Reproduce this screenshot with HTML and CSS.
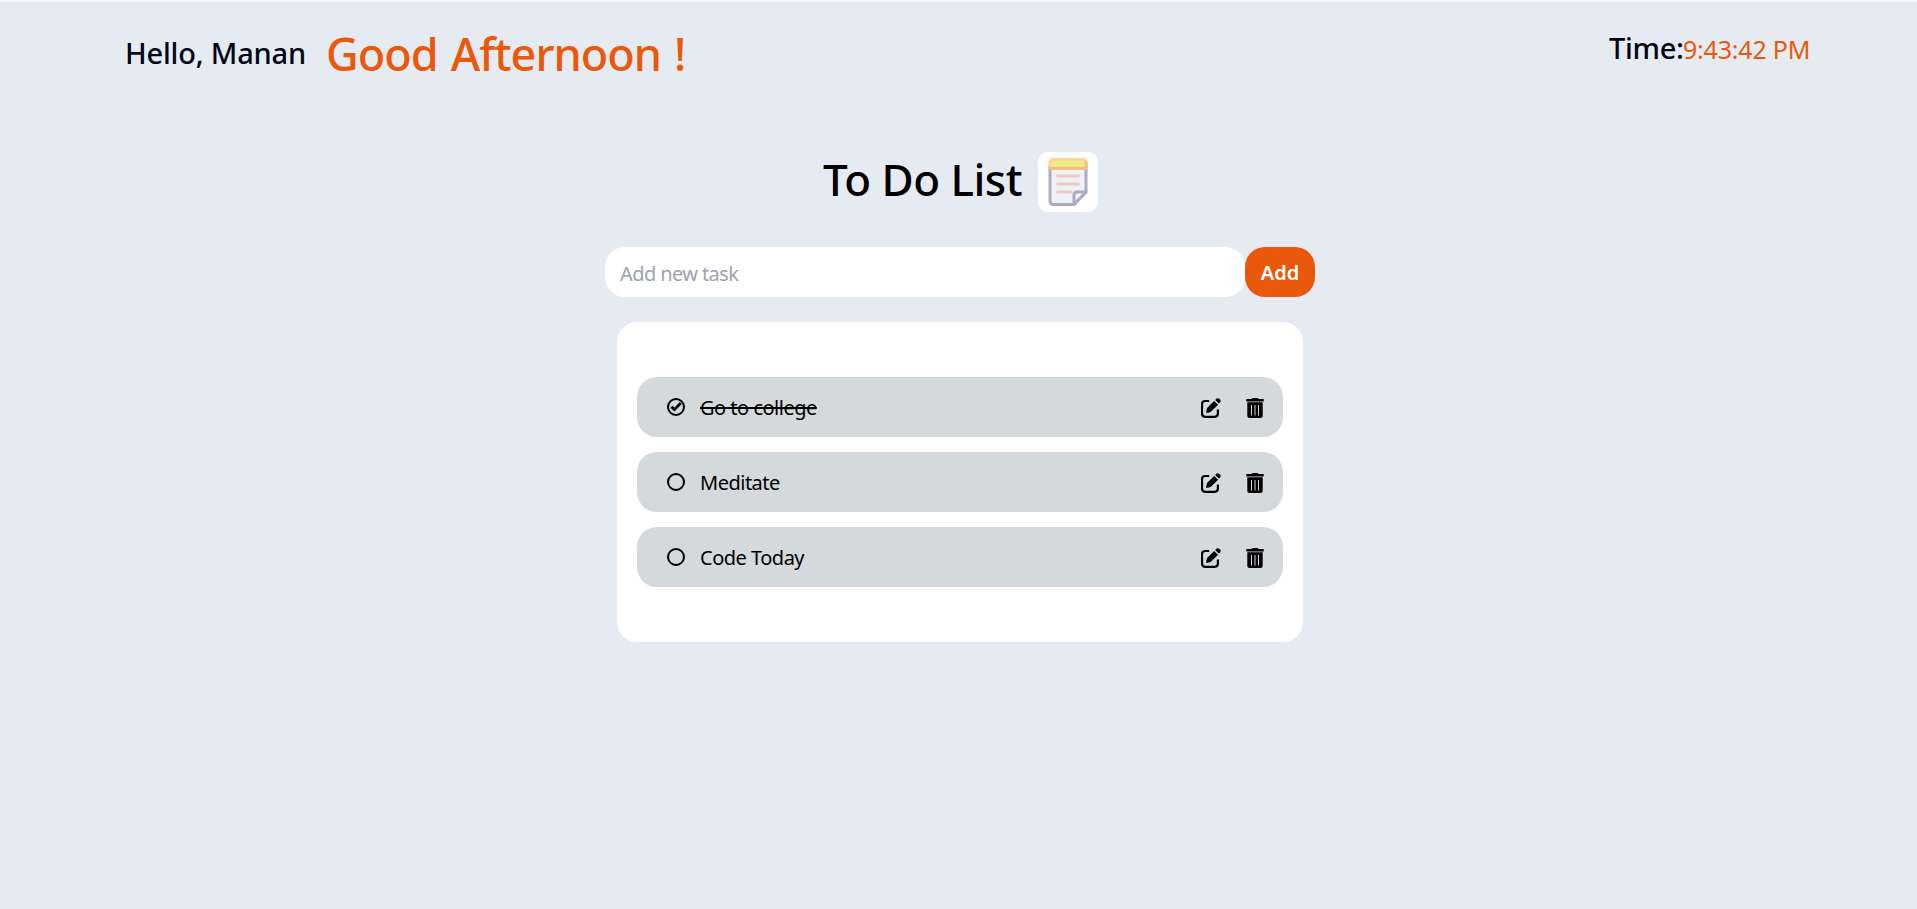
FILE: index.html
```html
<!DOCTYPE html>
<html lang="en">
<head>
<meta charset="utf-8">
<title>To Do List</title>
<link rel="stylesheet" href="styles.css">
</head>
<body>
<svg class="defs" aria-hidden="true">
  <symbol id="circle" viewBox="0 0 18 18"><circle cx="9" cy="9" r="8" fill="none" stroke="#000" stroke-width="2"/></symbol>
  <symbol id="check" viewBox="0 0 18 18"><circle cx="9" cy="9" r="8" fill="none" stroke="#000" stroke-width="2"/><path d="M4.4 8.8l3 2.8 6.300-6.600" fill="none" stroke="#000" stroke-width="2.8"/></symbol>
  <symbol id="edit" viewBox="0 0 20 20"><path d="M8.200 3H4.200Q1 3 1 6.200V15.600Q1 18.800 4.200 18.800H13.600Q16.900 18.800 16.900 15.600V11.600" fill="none" stroke="#000" stroke-width="2.2"/><path d="M13.100 2.900L17.100 6.700L9.900 13.700Q8.700 14.600 5.100 14.900Q5.400 11.100 6.300 9.800ZM14.200 2L15.700.6Q17 -.4 18.700 1.100Q20.300 2.800 19.200 4.200L17.900 5.600Z"/></symbol>
  <symbol id="trash" viewBox="0 0 18 20"><path d="M5.500 1L6.300 0H11.700L12.500 1H17.700V3.400H.3V1ZM1.300 4.200H16.700V17.500Q16.700 20 14.200 20H3.800Q1.300 20 1.300 17.500Z"/><path d="M5.500 7v10.500M9 7v10.500M12.500 7v10.500" fill="none" stroke="#d4d9dc" stroke-width="1"/></symbol>
</svg>
<header class="header">
  <div class="greeting"><span class="hello">Hello, Manan</span><span class="daypart">Good Afternoon !</span></div>
  <div class="clock"><span class="clock-label">Time:</span><span class="clock-value">9:43:42 PM</span></div>
</header>
<main class="main">
  <div class="title-row">
    <h1 class="title">To Do List</h1>
    <div class="tile">
      <svg width="60" height="60" viewBox="0 0 60 60">
        <path d="M12 14V49Q12 52.5 15.5 52.5H36L48 40V14Z" fill="#eff1f4" stroke="#a9acc2" stroke-width="3" stroke-linejoin="round"/>
        <path d="M36 52.5V43Q36 40 39 40H48Z" fill="#f3f4f7" stroke="#a9acc2" stroke-width="3" stroke-linejoin="round"/>
        <path d="M19.5 24H40.5M19.5 32H40.5M19.5 40H33" stroke="#eccaca" stroke-width="2.8" stroke-linecap="round"/>
        <path d="M10.500 14H49.500V16Q49.500 18 47.500 18H12.500Q10.500 18 10.500 16Z" fill="#f4be7b"/>
        <path d="M10.500 15V11Q10.500 6 15.500 6H44.500Q49.500 6 49.500 11V15Z" fill="#fdd596"/>
        <path d="M46 9Q49.500 8 49.500 12V16H46Z" fill="#f4be7b"/>
        <path d="M13.500 14.500V11Q13.500 9 15.500 9H44.500Q46.500 9 46.500 11V14.500Z" fill="#eeee88"/>
      </svg>
    </div>
  </div>
  <form class="add-form">
    <input class="task-input" type="text" placeholder="Add new task">
    <button class="add-button" type="button">Add</button>
  </form>
  <section class="card">
    <div class="task"><svg class="mark"><use href="#check"/></svg><span class="label done">Go to college</span><svg class="edit"><use href="#edit"/></svg><svg class="trash"><use href="#trash"/></svg></div>
    <div class="task"><svg class="mark"><use href="#circle"/></svg><span class="label">Meditate</span><svg class="edit"><use href="#edit"/></svg><svg class="trash"><use href="#trash"/></svg></div>
    <div class="task"><svg class="mark"><use href="#circle"/></svg><span class="label">Code Today</span><svg class="edit"><use href="#edit"/></svg><svg class="trash"><use href="#trash"/></svg></div>
  </section>
</main>
</body>
</html>
```
FILE: styles.css
```css
* { box-sizing: border-box; }
body {
  margin: 0;
  height: 909px;
  overflow: hidden;
  border-top: 2px solid #fbf5fd;
  background: #e6ebf2;
  color: #000;
  font-family: "Noto Sans", "Open Sans", sans-serif;
}
.defs { display: none; }
.header {
  display: flex;
  justify-content: space-between;
  align-items: flex-start;
  height: 150px;
  padding: 20px 107px 0 125px;
  white-space: nowrap;
  font-weight: 500;
}
.greeting { display: flex; align-items: flex-start; line-height: 65px; }
.hello { width: 201px; font-size: 29px; line-height: 62px; letter-spacing: -0.2px; color: #020617; }
.daypart { font-size: 45px; line-height: 64px; letter-spacing: -1px; word-spacing: 2.5px; color: #ea580c; }
.clock { display: flex; align-items: baseline; width: 201px; line-height: 52px; }
.clock-label { width: 74px; font-size: 29px; letter-spacing: -0.3px; color: #020617; }
.clock-value { font-size: 25px; font-weight: 400; letter-spacing: -0.2px; color: #ea580c; }
.main { display: flex; flex-direction: column; align-items: center; }
.title-row { display: flex; align-items: center; width: 275px; height: 60px; margin-left: 4px; }
.title { width: 215px; margin: 0; font-size: 44px; font-weight: 500; line-height: 60px; letter-spacing: -0.5px; padding-bottom: 6px; white-space: nowrap; }
.tile { width: 60px; height: 60px; border-radius: 10px; background: #fff; }
.tile svg { display: block; }
.add-form { display: flex; width: 710px; height: 50px; margin: 35px 0 25px 3px; }
.task-input {
  width: 640px;
  padding: 3px 15px 0;
  border: 0;
  border-radius: 20px;
  background: #fff;
  font: 20px "Noto Sans", sans-serif;
  letter-spacing: -0.6px;
}
.task-input::placeholder { color: #9ca3af; opacity: 1; }
.add-button {
  width: 70px;
  padding: 0;
  border: 0;
  border-radius: 20px;
  background: #ea580c;
  color: #fff;
  font: 600 20px "Noto Sans", sans-serif;
}
.card {
  display: flex;
  flex-direction: column;
  gap: 15px;
  width: 686px;
  height: 320px;
  margin-left: 3px;
  padding: 55px 20px;
  border-radius: 20px;
  background: #fff;
}
.task {
  display: flex;
  align-items: center;
  height: 60px;
  padding: 0 19px 0 30px;
  border-radius: 20px;
  background: #d4d9dc;
}
.mark { width: 18px; height: 18px; margin-right: 15px; }
.label { margin-right: auto; padding-top: 2px; font-size: 20px; line-height: 28px; letter-spacing: -0.5px; }
.done { text-decoration: line-through 2px; }
.edit { width: 20px; height: 20px; margin: 2px 25px 0 0; overflow: visible; }
.trash { width: 18px; height: 20px; margin-top: 2px; }
```
